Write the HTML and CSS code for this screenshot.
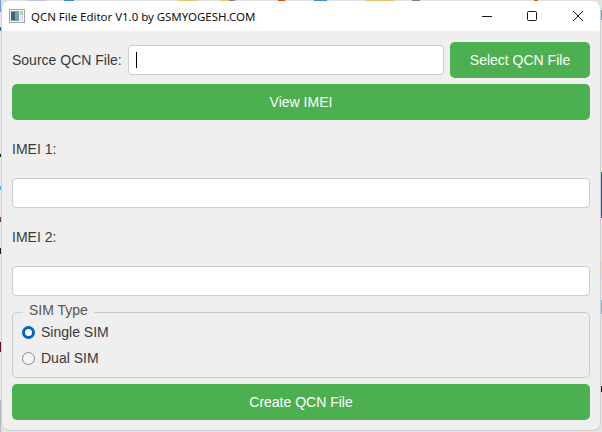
FILE: index.html
```html
<!DOCTYPE html>
<html lang="en">
<head>
<meta charset="utf-8">
<title>QCN File Editor</title>
<link rel="stylesheet" href="styles.css">
</head>
<body>
<div class="desk-top"></div>
<div class="desk-left"></div>
<div class="desk-right"></div>
<div class="window">
  <header class="titlebar">
    <svg class="app-icon" width="16" height="14" viewBox="0 0 16 14">
      <rect x="0.5" y="0.5" width="15" height="13" fill="#f4f4f4" stroke="#a6a6a6"/>
      <rect x="2" y="2" width="8" height="10" fill="#6fa3a8"/>
      <rect x="2" y="3" width="4" height="8" fill="#3d6470"/>
      <rect x="11" y="2" width="3" height="4" fill="#a8d8b0"/>
      <rect x="11" y="7" width="3" height="5" fill="#dfe7ea"/>
    </svg>
    <span class="title">QCN File Editor V1.0 by GSMYOGESH.COM</span>
    <div class="controls">
      <svg class="ctl" width="45" height="30" viewBox="0 0 45 30"><path d="M17 15.5h10" stroke="#1a1a1a" fill="none"/></svg>
      <svg class="ctl" width="45" height="30" viewBox="0 0 45 30"><rect x="17.5" y="10.5" width="9" height="9" rx="1" stroke="#1a1a1a" fill="none"/></svg>
      <svg class="ctl" width="45" height="30" viewBox="0 0 45 30"><path d="M18 10l10 10M28 10l-10 10" stroke="#1a1a1a" fill="none"/></svg>
    </div>
  </header>
  <main class="content">
    <div class="source-row">
      <label class="label">Source QCN File:</label>
      <div class="input source-input"><span class="caret"></span></div>
      <button class="btn select-btn">Select QCN File</button>
    </div>
    <button class="btn wide-btn">View IMEI</button>
    <div class="label imei-label">IMEI 1:</div>
    <div class="input imei-input"></div>
    <div class="label imei-label">IMEI 2:</div>
    <div class="input imei-input"></div>
    <fieldset class="group">
      <legend class="legend">SIM Type</legend>
      <div class="radio-row"><span class="radio checked"></span><span class="label">Single SIM</span></div>
      <div class="radio-row"><span class="radio"></span><span class="label">Dual SIM</span></div>
    </fieldset>
    <button class="btn wide-btn">Create QCN File</button>
  </main>
</div>
</body>
</html>
```
FILE: styles.css
```css
* { box-sizing: border-box; }
html, body { margin: 0; height: 100%; }
body {
  background: #e4e4e4;
  padding: 1px 0 0 1px;
  overflow: hidden;
  font-family: "Liberation Sans", Arial, sans-serif;
}
.desk-top {
  position: absolute;
  left: 0;
  top: 0;
  width: 602px;
  height: 1px;
  background: linear-gradient(90deg,
    #e0e0e0 27px, #b9c6de 27px, #b9c6de 46px, #e0e0e0 46px,
    #e0e0e0 64px, #2f8fd8 64px, #2f8fd8 74px, #e0e0e0 74px,
    #e0e0e0 178px, #e8c56c 178px, #e8c56c 198px, #e0e0e0 198px,
    #e0e0e0 220px, #e8c56c 220px, #e8c56c 229px, #808080 229px, #808080 235px, #e0e0e0 235px,
    #e0e0e0 278px, #d2501c 278px, #d2501c 285px, #e0e0e0 285px,
    #e0e0e0 314px, #3b8fd8 314px, #3b8fd8 327px, #e0e0e0 327px,
    #e0e0e0 366px, #e8c56c 366px, #e8c56c 394px, #e0e0e0 394px,
    #e0e0e0 412px, #808080 412px, #808080 420px, #e0e0e0 420px,
    #e0e0e0 534px, #e0641c 534px, #e0641c 538px, #e0e0e0 538px);
}
.desk-left {
  position: absolute;
  left: 0;
  top: 0;
  width: 1px;
  height: 432px;
  background: linear-gradient(180deg,
    #6f9ae0 0, #6f9ae0 12px, #ececec 12px,
    #ececec 27px, #2a5aa0 27px, #2a5aa0 31px, #ececec 31px,
    #ececec 154px, #222 154px, #222 157px, #ececec 157px,
    #ececec 186px, #55b4ea 186px, #55b4ea 190px, #ececec 190px,
    #ececec 217px, #7a3a40 217px, #7a3a40 222px, #ececec 222px,
    #ececec 248px, #222 248px, #222 254px, #ececec 254px,
    #ececec 342px, #5c0c3c 342px, #5c0c3c 352px, #ececec 352px,
    #ececec 400px, #b8b8b8 400px);
}
.desk-right {
  position: absolute;
  left: 601px;
  top: 0;
  width: 1px;
  height: 432px;
  background: linear-gradient(180deg,
    #e8e8e8 10px, #6a9bb8 10px, #6a9bb8 20px, #e8e8e8 20px,
    #e8e8e8 172px, #2f55a0 172px, #2f55a0 218px, #e8e8e8 218px,
    #e8e8e8 262px, #e8e4b0 262px, #e8e4b0 280px, #e8e8e8 280px,
    #e8e8e8 300px, #7fb4e0 300px, #7fb4e0 314px, #e8e8e8 314px,
    #e8e8e8 386px, #241010 386px, #241010 392px, #e8e8e8 392px);
}
.window {
  position: relative;
  width: 600px;
  height: 430px;
  background: #efefef;
  border: 1px solid #cfcfcf;
  border-top: 0;
  border-radius: 8px;
  overflow: hidden;
  display: flex;
  flex-direction: column;
}
.titlebar {
  height: 30px;
  flex: none;
  background: #fff;
  display: flex;
  align-items: center;
  padding-left: 7px;
}
.app-icon { flex: none; }
.title {
  margin-left: 6px;
  font-size: 11.5px;
  letter-spacing: -0.03px;
  color: #111;
  font-family: "Noto Sans", sans-serif;
}
.controls { margin-left: auto; display: flex; }
.ctl { display: block; flex: none; }
.content {
  flex: 1;
  padding: 11px 10px 0 10px;
  display: flex;
  flex-direction: column;
}
.label { font-size: 14px; color: #3a3a3a; }
.source-row { display: flex; align-items: center; height: 36px; }
.source-row .label { width: 116px; flex: none; }
.input {
  height: 30px;
  background: #fff;
  border: 1px solid #ccc;
  border-radius: 4px;
}
.source-input {
  flex: 1;
  display: flex;
  align-items: center;
  padding-left: 7px;
}
.caret { width: 1px; height: 16px; background: #000; }
.btn {
  border: 0;
  border-radius: 5px;
  background: #4caf50;
  color: #fff;
  font: 14px "Liberation Sans", Arial, sans-serif;
  height: 36px;
  padding: 0;
}
.select-btn { width: 140px; margin-left: 6px; flex: none; }
.wide-btn { width: 100%; flex: none; margin-top: 6px; }
.imei-label { height: 16px; line-height: 16px; margin: 21px 0; }
.imei-input { width: 100%; flex: none; }
.group {
  margin: 6px 0 0;
  padding: 0 0 0 9px;
  height: 76px;
  border: 1px solid #ccc;
  border-radius: 5px;
  min-width: 0;
}
.legend {
  padding: 0 6px 4px;
  margin: 0 0 -3px 1px;
  font-size: 14px;
  color: #555;
  line-height: 16px;
}
.radio-row { display: flex; align-items: center; height: 26px; gap: 6px; }
.radio {
  width: 13px;
  height: 13px;
  border: 1px solid #8a8a8a;
  border-radius: 50%;
  background: #f4f4f4;
  flex: none;
}
.radio.checked { border: 3px solid #0067c0; background: #fff; }
```
